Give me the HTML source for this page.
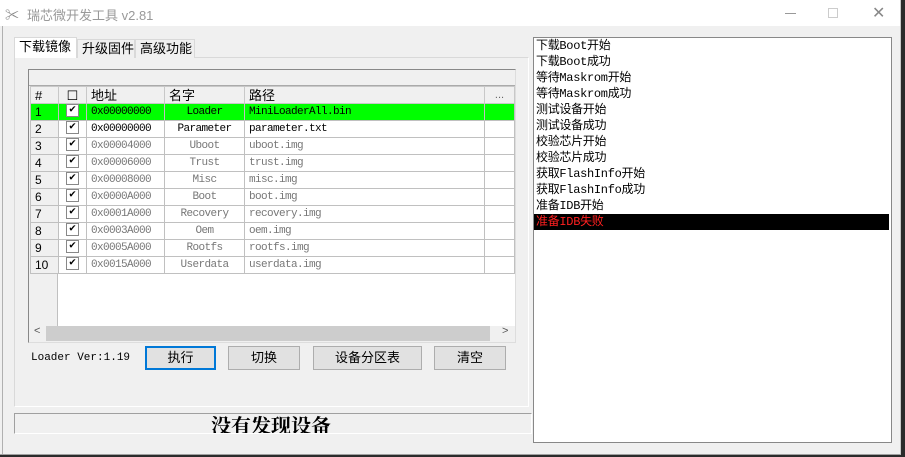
<!DOCTYPE html>
<html><head><meta charset="utf-8"><style>
*{margin:0;padding:0;box-sizing:border-box}
body{width:905px;height:457px;overflow:hidden;background:#2b2b2b;position:relative;font-family:"Liberation Sans","Noto Sans CJK SC",sans-serif;font-size:12px}
.a{position:absolute}
.win{left:0;top:0;width:901px;height:455px;background:#f0f0f0;border-bottom:1px solid #a0a0a0;border-right:1px solid #c8c8c8}
.title{left:0;top:0;width:900px;height:26px;background:#fff}
.mono{font-family:"Liberation Mono","Noto Sans CJK SC",monospace}
.tab{top:39px;height:19px;border:1px solid #d9d9d9;border-bottom:none;background:#f0f0f0;font-size:13px;line-height:17px;padding-left:4px}
table{border-collapse:collapse;position:absolute;left:30px;top:86px;font-family:"Liberation Mono","Noto Sans CJK SC",monospace;font-size:11px;letter-spacing:-0.6px}
td{height:17px;line-height:15px;border:1px solid #c0c0c0;padding:0 4px;white-space:nowrap;color:#777;background:#fff;overflow:hidden}
tr.h td{background:#f0f0f0;color:#000;font-family:"Liberation Sans","Noto Sans CJK SC",sans-serif;font-size:13px;letter-spacing:0;border-color:#c8c8c8}
td.n{background:#f0f0f0;color:#000;font-family:"Liberation Sans",sans-serif;font-size:12px;letter-spacing:0}
td.c{text-align:center;padding:0}
.cb{display:inline-block;width:13px;height:13px;border:1px solid #888;background:#fff;font-size:11px;line-height:11px;color:#000;vertical-align:middle;text-align:center;letter-spacing:0}
tr.g td{background:#00ff00;color:#000}
tr.g td.n{background:#00ff00}
tr.b td{color:#000}
.btn{top:346px;height:24px;border:1px solid #adadad;background:#e1e1e1;text-align:center;font-size:13px;line-height:22px}
.log div{height:16px;line-height:16px;font-family:"Liberation Mono","Noto Sans CJK SC",monospace;font-size:12px;padding-left:2px;letter-spacing:-0.3px}
</style></head><body>
<div class="a win"></div>
<div class="a title"></div>
<div class="a" style="left:5px;top:5px;font-size:14px;color:#888">✂</div>
<div class="a" style="left:27px;top:5px;font-size:13px;color:#999">瑞芯微开发工具 v2.81</div>
<div class="a" style="left:785px;top:13px;width:11px;height:1px;background:#999"></div>
<div class="a" style="left:828px;top:8px;width:10px;height:10px;border:1px solid #ccc"></div>
<div class="a" style="left:872px;top:3px;font-size:16px;color:#888">✕</div>
<div class="a" style="left:2px;top:26px;width:1px;height:428px;background:#b0b0b0"></div>

<div class="a" style="left:14px;top:57px;width:515px;height:350px;border:1px solid #d9d9d9;background:#f0f0f0;border-right-color:#fff;border-bottom-color:#fff"></div>
<div class="a tab" style="left:77px;width:58px">升级固件</div>
<div class="a tab" style="left:135px;width:60px">高级功能</div>
<div class="a tab" style="left:14px;top:37px;height:21px;width:63px;background:#fff;border-color:#d9d9d9">下载镜像</div>

<div class="a" style="left:28px;top:69px;width:488px;height:274px;border:1px solid #888;border-right-color:#ddd;border-bottom-color:#ddd;background:#fff"></div>
<div class="a" style="left:29px;top:70px;width:486px;height:16px;background:#f0f0f0;border-bottom:1px solid #aaa"></div>
<div class="a" style="left:29px;top:86px;width:29px;height:240px;background:#f0f0f0;border-right:1px solid #c0c0c0"></div>
<table>
<tr class="h"><td class="n" style="width:28px">#</td><td class="c" style="width:28px">☐</td><td style="width:78px">地址</td><td style="width:80px">名字</td><td style="width:240px">路径</td><td style="width:30px;text-align:center;color:#666;font-size:11px">...</td></tr>
<tr class="g"><td class="n">1</td><td class="c"><span class="cb">✔</span></td><td>0x00000000</td><td style="text-align:center">Loader</td><td>MiniLoaderAll.bin</td><td></td></tr>
<tr class="b"><td class="n">2</td><td class="c"><span class="cb">✔</span></td><td>0x00000000</td><td style="text-align:center">Parameter</td><td>parameter.txt</td><td></td></tr>
<tr><td class="n">3</td><td class="c"><span class="cb">✔</span></td><td>0x00004000</td><td style="text-align:center">Uboot</td><td>uboot.img</td><td></td></tr>
<tr><td class="n">4</td><td class="c"><span class="cb">✔</span></td><td>0x00006000</td><td style="text-align:center">Trust</td><td>trust.img</td><td></td></tr>
<tr><td class="n">5</td><td class="c"><span class="cb">✔</span></td><td>0x00008000</td><td style="text-align:center">Misc</td><td>misc.img</td><td></td></tr>
<tr><td class="n">6</td><td class="c"><span class="cb">✔</span></td><td>0x0000A000</td><td style="text-align:center">Boot</td><td>boot.img</td><td></td></tr>
<tr><td class="n">7</td><td class="c"><span class="cb">✔</span></td><td>0x0001A000</td><td style="text-align:center">Recovery</td><td>recovery.img</td><td></td></tr>
<tr><td class="n">8</td><td class="c"><span class="cb">✔</span></td><td>0x0003A000</td><td style="text-align:center">Oem</td><td>oem.img</td><td></td></tr>
<tr><td class="n">9</td><td class="c"><span class="cb">✔</span></td><td>0x0005A000</td><td style="text-align:center">Rootfs</td><td>rootfs.img</td><td></td></tr>
<tr><td class="n">10</td><td class="c"><span class="cb">✔</span></td><td>0x0015A000</td><td style="text-align:center">Userdata</td><td>userdata.img</td><td></td></tr>
</table>
<div class="a" style="left:29px;top:326px;width:486px;height:16px;background:#f0f0f0"></div>
<div class="a" style="left:46px;top:326px;width:444px;height:15px;background:#cdcdcd"></div>
<div class="a" style="left:34px;top:325px;font-size:11px;color:#555">&lt;</div>
<div class="a" style="left:502px;top:325px;font-size:11px;color:#555">&gt;</div>

<div class="a mono" style="left:31px;top:352px;font-size:11px">Loader Ver:1.19</div>
<div class="a btn" style="left:145px;width:71px;border:2px solid #0078d7;line-height:20px">执行</div>
<div class="a btn" style="left:228px;width:72px">切换</div>
<div class="a btn" style="left:313px;width:109px">设备分区表</div>
<div class="a btn" style="left:434px;width:72px">清空</div>

<div class="a" style="left:14px;top:413px;width:518px;height:21px;border:1px solid #a0a0a0;border-right-color:#fff;border-bottom-color:#fff;text-align:center;font-family:'Noto Serif CJK SC',serif;font-weight:bold;font-size:20px;line-height:22px;overflow:hidden;padding-right:4px">没有发现设备</div>

<div class="a log" style="left:533px;top:37px;width:359px;height:406px;border:1px solid #888;background:#fff;padding-top:0">
<div>下载Boot开始</div><div>下载Boot成功</div><div>等待Maskrom开始</div><div>等待Maskrom成功</div><div>测试设备开始</div><div>测试设备成功</div><div>校验芯片开始</div><div>校验芯片成功</div><div>获取FlashInfo开始</div><div>获取FlashInfo成功</div><div>准备IDB开始</div><div style="background:#000;color:#ff2020;margin-right:2px">准备IDB失败</div>
</div>
</body></html>
